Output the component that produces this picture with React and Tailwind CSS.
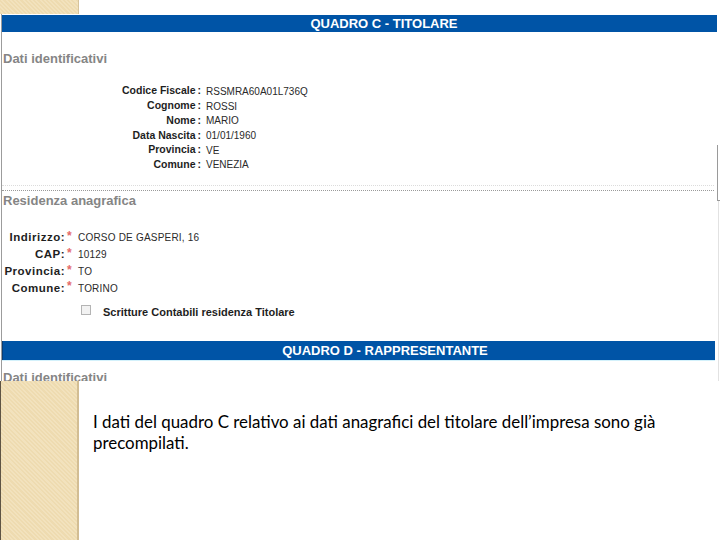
export default function App() {
  const beige =
    "bg-[#efdcb1] bg-[repeating-linear-gradient(45deg,#eedbb0_0px,#eedbb0_1.5px,#f2e2bd_1.5px,#f2e2bd_3px)]";
  const ui = { fontFamily: '"Liberation Sans", Arial, sans-serif' };
  const fields1 = [
    ["Codice Fiscale", "RSSMRA60A01L736Q"],
    ["Cognome", "ROSSI"],
    ["Nome", "MARIO"],
    ["Data Nascita", "01/01/1960"],
    ["Provincia", "VE"],
    ["Comune", "VENEZIA"],
  ];
  const fields2 = [
    ["Indirizzo", "CORSO DE GASPERI, 16"],
    ["CAP", "10129"],
    ["Provincia", "TO"],
    ["Comune", "TORINO"],
  ];
  return (
    <div className="w-[720px] h-[540px] bg-white overflow-hidden flex flex-col">
      {/* top beige strip */}
      <div className={`h-[14px] w-[79px] shrink-0 border-r border-[#d6c39b] ${beige}`} />

      {/* embedded screenshot */}
      <div className="h-[367px] w-[720px] shrink-0 overflow-hidden flex bg-white" style={ui}>
        <div className="w-[716px] ml-[1px] border-l border-[#9c9c9c] flex flex-col">
          <div className="h-[1px] shrink-0" />
          <div className="h-[17px] w-[715px] shrink-0 bg-[#0054a6] overflow-hidden">
            <div className="w-[764px] text-center text-white font-bold text-[13px] leading-[17px]">
              QUADRO C - TITOLARE
            </div>
          </div>

          <div className="h-[52px] shrink-0 pt-[19px] pl-[1px] text-[13px] leading-[16px] font-bold text-[#858585]">
            Dati identificativi
          </div>

          <div className="h-[84px] shrink-0 overflow-hidden flex flex-col">
            {fields1.map(([l, v]) => (
              <div key={l} className="h-[14.7px] shrink-0 flex items-center">
                <div className="w-[199px] text-right text-[10.5px] font-bold text-[#1e1e1e] whitespace-nowrap">
                  {l}
                  <span className="ml-[2px]">:</span>
                </div>
                <div className="pl-[5px] text-[10px] text-[#2a2a2a] whitespace-nowrap">{v}</div>
              </div>
            ))}
          </div>

          <div className="h-[17px] shrink-0" />
          <div className="h-[6px] w-[712px] shrink-0 border-t border-dotted border-[#dcdcdc] border-b border-b-[#9a9a9a]" />

          <div className="h-[22px] shrink-0 pt-[2px] pl-[1px] text-[13px] leading-[16px] font-bold text-[#858585]">
            Residenza anagrafica
          </div>

          <div className="pt-[16.6px] shrink-0 flex flex-col">
            {fields2.map(([l, v]) => (
              <div key={l} className="h-[16.8px] shrink-0 flex items-center">
                <div className="w-[63px] text-right text-[11.5px] tracking-[0.5px] font-bold text-[#1e1e1e] whitespace-nowrap">
                  {l}:
                </div>
                <span className="w-[13px] pl-[2px] text-[12px] font-bold text-[#e46b6b] mb-[4px] leading-none">*</span>
                <div className="text-[10px] tracking-[0.2px] text-[#2a2a2a] whitespace-nowrap">{v}</div>
              </div>
            ))}
          </div>

          <div className="mt-[7.2px] h-[16px] shrink-0 flex items-center pl-[79px]">
            <span className="w-[10px] h-[10px] border border-[#b4b4b4] bg-[#f2f2f2] mb-[3px]" />
            <span className="ml-[12px] text-[11px] font-bold text-[#1e1e1e] whitespace-nowrap">
              Scritture Contabili residenza Titolare
            </span>
          </div>

          <div className="h-[21px] shrink-0" />
          <div className="h-[19px] w-[713px] shrink-0 bg-[#0054a6] border-l border-[#0a3d75] overflow-hidden">
            <div className="w-[764px] text-center text-white font-bold text-[13px] leading-[19px]">
              QUADRO D - RAPPRESENTANTE
            </div>
          </div>
          <div className="h-[1px] w-[713px] shrink-0 bg-[#d3f1fb]" />
          <div className="mt-[9px] shrink-0 pl-[1px] text-[13px] leading-[16px] font-bold text-[#858585]">
            Dati identificativi
          </div>
        </div>
        <div className="w-[3px] flex flex-col">
          <div className="mt-[131px] h-[56px] w-[3px] shrink-0 border-l border-b border-[#9a9a9a]" />
          <div className="flex-1 ml-[1px] border-l border-[#e2e2e2]" />
        </div>
      </div>

      {/* bottom */}
      <div className="flex flex-1">
        <div className={`w-[79px] border-l border-[#5e5444] border-r-2 border-r-[#d2bd93] ${beige}`} />
        <div
          className="pl-[14px] pt-[30px] text-[16.9px] leading-[21px] text-black w-[600px]"
          style={{ fontFamily: 'Lato, "Open Sans", sans-serif' }}
        >
          I dati del quadro C relativo ai dati anagrafici del titolare dell’impresa sono già precompilati.
        </div>
      </div>
    </div>
  );
}
